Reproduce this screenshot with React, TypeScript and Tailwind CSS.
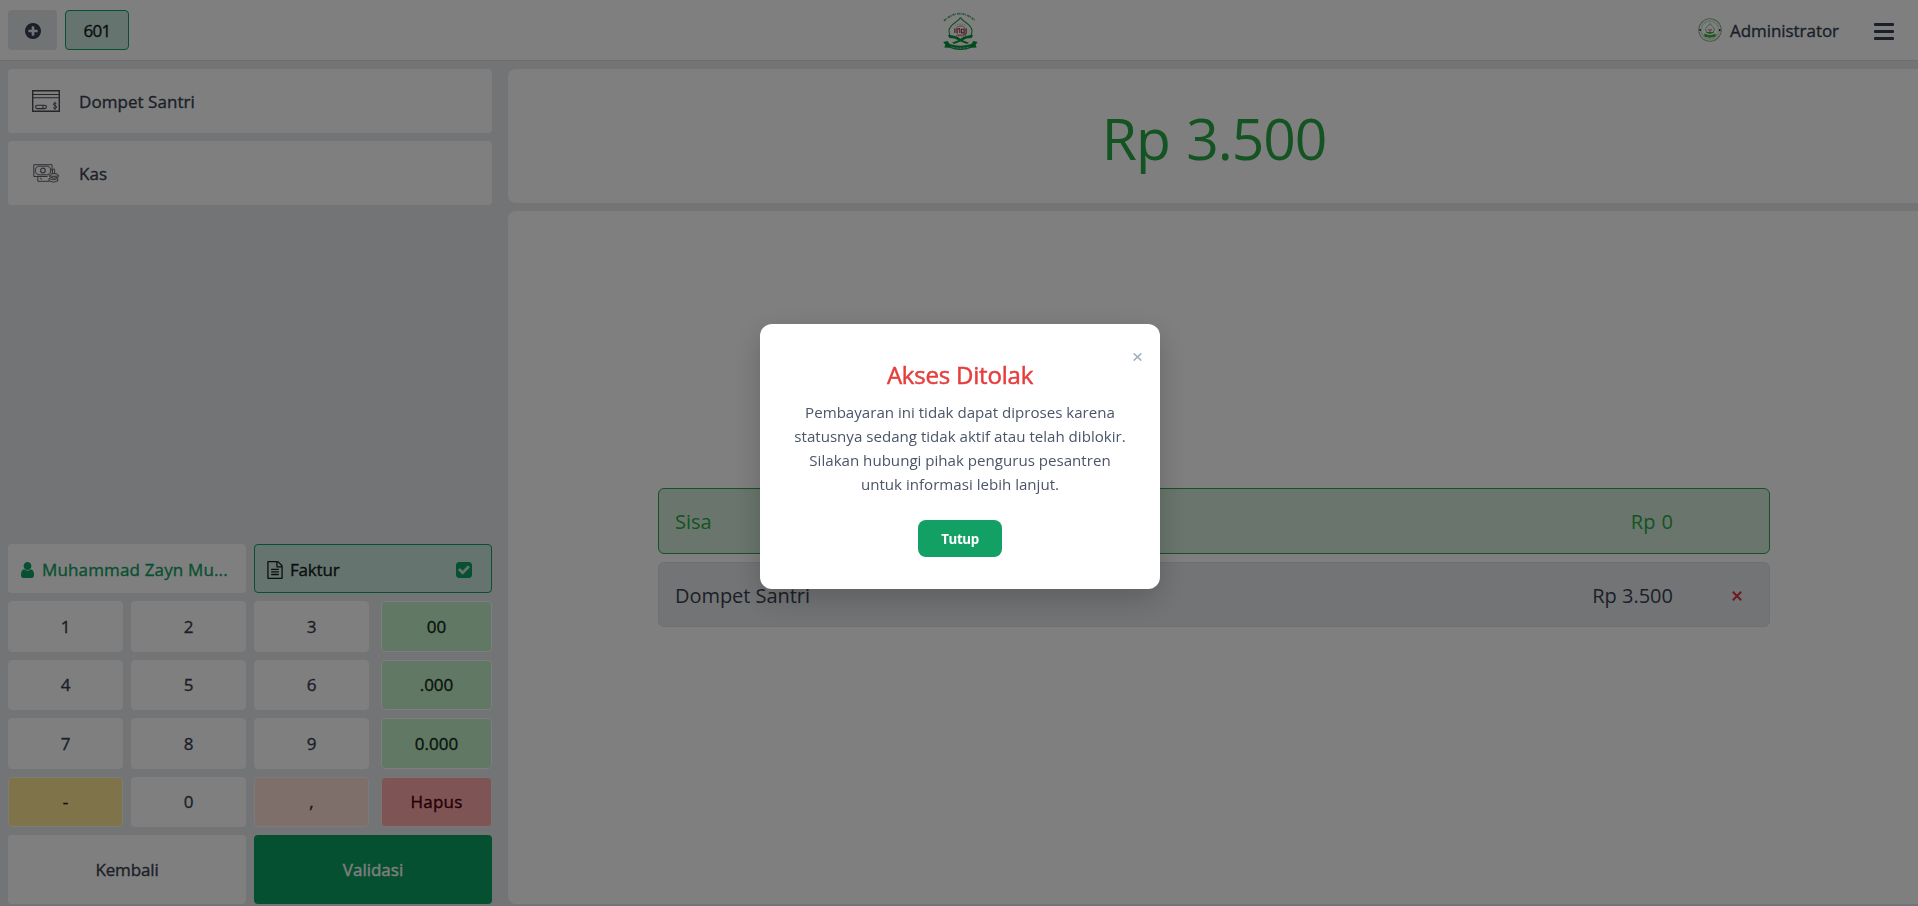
import type { ReactNode } from "react";

function PlusCircle() {
  return (
    <svg className="h-4 w-4" viewBox="0 128 1536 1536" fill="currentColor">
      <path d="M1216 960v-128q0-26-19-45t-45-19h-256v-256q0-26-19-45t-45-19h-128q-26 0-45 19t-19 45v256h-256q-26 0-45 19t-19 45v128q0 26 19 45t45 19h256v256q0 26 19 45t45 19h128q26 0 45-19t19-45v-256h256q26 0 45-19t19-45zm320-64q0 209-103 385.5t-279.5 279.5-385.5 103-385.5-103-279.5-279.5-103-385.5 103-385.5 279.5-279.5 385.5-103 385.5 103 279.5 279.5 103 385.5z" />
    </svg>
  );
}

function UserIcon() {
  return (
    <svg className="h-4 w-[13px] shrink-0" viewBox="0 128 1280 1536" fill="currentColor" preserveAspectRatio="none">
      <path d="M1280 1399q0 109-62.5 187t-150.5 78h-854q-88 0-150.5-78t-62.5-187q0-85 8.5-160.5t31.5-152 58.5-131 94-89 134.5-34.5q131 128 313 128t313-128q76 0 134.5 34.5t94 89 58.5 131 31.5 152 8.5 160.5zm-256-887q0 159-112.5 271.5t-271.5 112.5-271.5-112.5-112.5-271.5 112.5-271.5 271.5-112.5 271.5 112.5 112.5 271.5z" />
    </svg>
  );
}

function FileText() {
  return (
    <svg className="h-[18px] w-4 shrink-0" viewBox="0 0 1536 1792" fill="currentColor">
      <path d="M1468 380q28 28 48 76t20 88v1152q0 40-28 68t-68 28h-1344q-40 0-68-28t-28-68v-1600q0-40 28-68t68-28h896q40 0 88 20t76 48zm-444-244v376h376q-10-29-22-41l-313-313q-12-12-41-22zm384 1528v-1024h-416q-40 0-68-28t-28-68v-416h-768v1536h1280zm-1024-864q0-14 9-23t23-9h704q14 0 23 9t9 23v64q0 14-9 23t-23 9h-704q-14 0-23-9t-9-23v-64zm736 224q14 0 23 9t9 23v64q0 14-9 23t-23 9h-704q-14 0-23-9t-9-23v-64q0-14 9-23t23-9h704zm0 256q14 0 23 9t9 23v64q0 14-9 23t-23 9h-704q-14 0-23-9t-9-23v-64q0-14 9-23t23-9h704z" />
    </svg>
  );
}

function CheckSquare() {
  return (
    <svg className="h-4 w-4" viewBox="0 128 1536 1536" fill="currentColor">
      <path d="M685 1299l614-614q19-19 19-45t-19-45l-102-102q-19-19-45-19t-45 19l-467 467-211-211q-19-19-45-19t-45 19l-102 102q-19 19-19 45t19 45l358 358q19 19 45 19t45-19zm851-883v960q0 119-84.5 203.5t-203.5 84.5h-960q-119 0-203.5-84.5t-84.5-203.5v-960q0-119 84.5-203.5t203.5-84.5h960q119 0 203.5 84.5t84.5 203.5z" />
    </svg>
  );
}

function CardIcon() {
  return (
    <svg className="h-[22px] w-7" viewBox="0 0 28 22" fill="none" stroke="#4b4b55">
      <path d="M.7 .8H27.3V21.2H.7Z" strokeWidth="1.4" />
      <path d="M.7 4.5H27.3M.7 7.7H27.3" strokeWidth="1.1" />
      <rect x="3.6" y="15.3" width="10.8" height="3.3" rx="1.6" strokeWidth="1.1" />
      <path d="M11 15.3V18.6" strokeWidth="1" />
      <path d="M24.4 13.7C23.6 12.7 21.4 12.9 21.4 14.3C21.4 15.9 24.6 15.2 24.6 17.1C24.6 18.6 22.1 18.8 21.2 17.6M23 11.8V19.8" strokeWidth="1" />
    </svg>
  );
}

function CashIcon() {
  return (
    <svg className="h-[19px] w-[26px]" viewBox="0 0 26 19" fill="none" stroke="#65656e" strokeWidth="1">
      <path d="M.8 .7H19V7M.8 .7V12.5H14.5" />
      <path d="M4.5 2.2H15.5Q15.8 4 17.6 4.3V8.6Q15.8 9 15.5 10.8H4.5Q4.2 9 2.3 8.6V4.3Q4.2 4 4.5 2.2Z" />
      <circle cx="9.9" cy="6.5" r="2.3" strokeWidth="1.2" />
      <path d="M4.8 12.5V17.3H16M7 13.8L9 15.6" />
      <path d="M19.5 5.2H21.6V10M19.5 5.2V10" />
      <ellipse cx="21" cy="11" rx="4.3" ry="1.4" />
      <path d="M16.7 11V13Q21 15.5 25.3 13V11M16 14.5Q20 17 25 14.6M16 14.5V16.8Q20 19.5 24.8 17V14.6" />
    </svg>
  );
}

function SchoolLogo() {
  return (
    <svg className="h-[40px] w-9" viewBox="13 11.5 36 40" fill="none">
      <path d="M15 20.3Q30.5 6 46.3 20.3" stroke="#5fa87a" strokeWidth="1.8" strokeDasharray="2.2 .6 .7 1.2 2.8 .6 1.2 .9" />
      <path d="M31.5 17C29.5 22 20.5 22.5 20 30.5C19.9 33.5 21 35.5 22.3 37.2M31.5 17C33.5 22 42.5 22.5 43 30.5C43.1 33.5 42 35.5 40.7 37.2" stroke="#15a544" strokeWidth="1.1" />
      <path d="M26 25.2Q31.5 21.8 37.5 25.2" stroke="#b98a90" strokeWidth="1" strokeDasharray="1 1.4" />
      <circle cx="31.7" cy="30" r="4.6" stroke="#aaa" strokeWidth="1.1" />
      <path d="M25.8 27.8V32.6M28.2 32.4V28.6M28.2 29Q30.8 27 30.8 29.6V32.4M32.5 28.8H35V32.4H32.5ZM37.2 27.8V32.6Q37 34 35.2 33.9" stroke="#a03a4a" strokeWidth="1.1" />
      <path d="M27 35.3H37" stroke="#ad5868" strokeWidth="1" strokeDasharray="1.5 .7" />
      <path d="M18.8 34.6Q26.5 34.5 31.5 38.2Q36.5 34.5 44.2 34.6L42.6 37.6Q37 37.6 33.8 39.7L40 42.2L37.8 43.4L31.5 41L25.2 43.4L23 42.2L29.2 39.7Q26 37.6 20.4 37.6Z" fill="#0d963a" />
      <path d="M14.2 41.6L18.6 40.6L20.6 43.4Q31.5 47 42.4 43.4L44.4 40.6L48.6 41.6L46.6 44.2L47.6 47L42.6 47.2Q31.5 52 20.4 47.2L15.2 47L16.4 44.2Z" fill="#079338" />
      <path d="M22 46.2Q31.5 49.3 41 46.2" stroke="#83d3a0" strokeWidth="1.3" strokeDasharray=".7 .8 1.5 .6" />
    </svg>
  );
}

function AvatarSeal() {
  return (
    <svg className="h-6 w-6" viewBox="0 0 24 24" fill="none">
      <circle cx="12" cy="12" r="11.2" stroke="#76b77a" strokeWidth="1.1" strokeDasharray="2.5 .3" />
      <circle cx="12" cy="12" r="8.9" stroke="#b8c6b9" strokeWidth="1.5" strokeDasharray=".8 .6" />
      <path d="M2.2 11V13M21.8 11V13" stroke="#333" strokeWidth="1.4" />
      <path d="M12 5.5C11 8 7.7 8.3 7.5 12L9.5 15M12 5.5C13 8 16.3 8.3 16.5 12L14.5 15" stroke="#72c574" strokeWidth=".9" />
      <path d="M10 11.7H14M11 13H13" stroke="#d996b5" strokeWidth="1.5" />
      <path d="M8 14L12 15.6L16 14M6.5 16.2Q12 19 17.5 16.2L17 18.3Q12 20 7 18.3Z" stroke="#2fae2f" strokeWidth=".8" fill="#2fae2f" />
    </svg>
  );
}

function Key({ children, className = "bg-white border-white text-[#374151]" }: { children: ReactNode; className?: string }) {
  return <button className={`flex items-center justify-center rounded-[4px] border [-webkit-text-stroke:0.35px] ${className}`}>{children}</button>;
}

const GREEN_KEY = "bg-[#c3f0c8] border-[#fafcfa] text-[#102a16]";

function PaymentMethod({ icon, label }: { icon: ReactNode; label: string }) {
  return (
    <button className="flex h-16 items-center rounded-[4px] bg-white pl-6">
      <span className="flex w-7 justify-center">{icon}</span>
      <span className="ml-[19px] pt-px text-[17px] tracking-[0.05px] [-webkit-text-stroke:0.35px]">{label}</span>
    </button>
  );
}

function Header() {
  return (
    <header className="grid h-[61px] shrink-0 grid-cols-3 items-center border-b border-[#d8dadd] bg-white">
      <div className="flex gap-2 pl-2">
        <button className="flex h-10 w-[49px] items-center justify-center rounded-[4px] bg-[#e4e6ea] pt-px">
          <PlusCircle />
        </button>
        <button className="flex h-10 w-16 items-center justify-center rounded-[4px] border border-[#0fa064] bg-[#cae9dd] pt-px text-[17px] tracking-[-0.8px] text-[#161a20] [-webkit-text-stroke:0.35px]">
          601
        </button>
      </div>
      <div className="flex justify-center pt-1 pl-[3px]">
        <SchoolLogo />
      </div>
      <div className="flex items-center justify-end pr-6">
        <AvatarSeal />
        <span className="ml-2 pt-[2px] text-[17px] tracking-[-0.05px] [-webkit-text-stroke:0.35px]">Administrator</span>
        <span className="ml-[35px] flex w-5 flex-col gap-[4px] pt-[2px]">
          <i className="h-[3px] rounded-[1px] bg-[#374151]" />
          <i className="h-[3px] rounded-[1px] bg-[#374151]" />
          <i className="h-[3px] rounded-[1px] bg-[#374151]" />
        </span>
      </div>
    </header>
  );
}

function LeftPane() {
  return (
    <section className="flex w-[484px] shrink-0 flex-col gap-2 text-[17px]">
      <PaymentMethod icon={<CardIcon />} label="Dompet Santri" />
      <PaymentMethod icon={<CashIcon />} label="Kas" />
      <div className="flex-1" />
      <div className="grid h-[49px] grid-cols-2 gap-2 [-webkit-text-stroke:0.35px]">
        <button className="flex items-center rounded-[4px] bg-white pt-[2px] pl-[13px] text-[#0fa064]">
          <UserIcon />
          <span className="ml-2 tracking-[0.15px] whitespace-nowrap">Muhammad Zayn Mu...</span>
        </button>
        <button className="flex items-center rounded-[4px] border border-[#0fa064] bg-[#cae9dd] pt-[2px] pr-[19px] pl-3 text-[#161a20]">
          <FileText />
          <span className="ml-[7px] tracking-[-0.2px]">Faktur</span>
          <span className="ml-auto text-[#0fa064]">
            <CheckSquare />
          </span>
        </button>
      </div>
      <div className="grid h-[226px] grid-cols-[115px_115px_115px_115px] grid-rows-[51px_50px_51px_50px] gap-2 [&>button:nth-child(4n)]:ml-1">
        <Key>1</Key>
        <Key>2</Key>
        <Key>3</Key>
        <Key className={GREEN_KEY}>00</Key>
        <Key>4</Key>
        <Key>5</Key>
        <Key>6</Key>
        <Key className={GREEN_KEY}>.000</Key>
        <Key>7</Key>
        <Key>8</Key>
        <Key>9</Key>
        <Key className={GREEN_KEY}>0.000</Key>
        <Key className="border-[#fbf8ee] bg-[#ffe694] text-[#2b230a]">-</Key>
        <Key>0</Key>
        <Key className="border-[#fbf5f3] bg-[#ffded5] text-[#3b2722]">,</Key>
        <Key className="border-[#f7eaec] bg-[#ffa9ab] tracking-[0.2px] text-[#45000c]">Hapus</Key>
      </div>
      <div className="grid h-[69px] grid-cols-2 gap-2 [-webkit-text-stroke:0.35px]">
        <button className="rounded-[4px] bg-white pt-px tracking-[-0.15px]">Kembali</button>
        <button className="rounded-[4px] bg-[#0aa062] pt-px text-white">Validasi</button>
      </div>
    </section>
  );
}

function RightPane() {
  return (
    <section className="flex flex-1 flex-col gap-2">
      <div className="flex h-[134px] items-center justify-center rounded-l-[8px] bg-white pt-[5px] pl-0.5 text-[57px] tracking-[-1.1px] text-[#28a745] [word-spacing:3px]">
        Rp 3.500
      </div>
      <div className="flex flex-1 flex-col items-center rounded-l-[8px] bg-white pt-[277px] pl-0.5 text-[20px]">
        <div className="flex h-[66px] w-[1112px] items-center rounded-[6px] border border-[#28a745] bg-[#d4edda] pt-0.5 pr-24 pl-4 text-[#28a745]">
          <span>Sisa</span>
          <span className="ml-auto [word-spacing:1px]">Rp 0</span>
        </div>
        <div className="mt-2 flex h-[65px] w-[1112px] items-center rounded-[6px] border border-[#dfe1e5] bg-[#e7e9ed] pt-[3px] pr-[27px] pl-4">
          <span className="tracking-[-0.05px]">Dompet Santri</span>
          <span className="ml-auto">Rp 3.500</span>
          <svg className="ml-[59px] h-[10px] w-[10px]" viewBox="0 0 10 10" stroke="#dc3545" strokeWidth="2">
            <path d="M.8 .8L9.2 9.2M9.2 .8L.8 9.2" />
          </svg>
        </div>
      </div>
    </section>
  );
}

function AccessDialog() {
  return (
    <div className="fixed inset-0 flex justify-center bg-black/50 pt-[324px] pl-[2px]">
      <div className="relative flex h-[265px] w-[400px] flex-col items-center rounded-[12px] bg-white pt-[33px] shadow-[0_10px_30px_rgba(0,0,0,0.2)]">
        <button className="absolute top-[29px] right-[18px] flex text-[#a0aec0]">
          <svg className="h-[8px] w-[9px]" viewBox="0 0 9 8" stroke="currentColor" strokeWidth="1.5">
            <path d="M.7 .4L8.3 7.6M8.3 .4L.7 7.6" />
          </svg>
        </button>
        <h2 className="text-[24px] leading-[36px] tracking-[-0.2px] text-[#e53e3e] [-webkit-text-stroke:0.5px]">Akses Ditolak</h2>
        <p className="mt-[7px] text-center text-[15.1px] leading-6 whitespace-nowrap text-[#4a5568]">
          Pembayaran ini tidak dapat diproses karena
          <br />
          statusnya sedang tidak aktif atau telah diblokir.
          <br />
          Silakan hubungi pihak pengurus pesantren
          <br />
          untuk informasi lebih lanjut.
        </p>
        <button className="mt-[24px] h-[37px] w-[84px] rounded-[8px] bg-[#12a064] pt-0.5 text-[13.3px] font-bold tracking-[-0.4px] text-white">Tutup</button>
      </div>
    </div>
  );
}

export default function App() {
  return (
    <div className="flex h-[906px] flex-col overflow-hidden bg-[#e7e9ed] font-['Open_Sans','Noto_Sans',sans-serif] text-[#374151]">
      <Header />
      <main className="flex flex-1 gap-4 pt-2 pb-0.5 pl-2">
        <LeftPane />
        <RightPane />
      </main>
      <AccessDialog />
    </div>
  );
}
